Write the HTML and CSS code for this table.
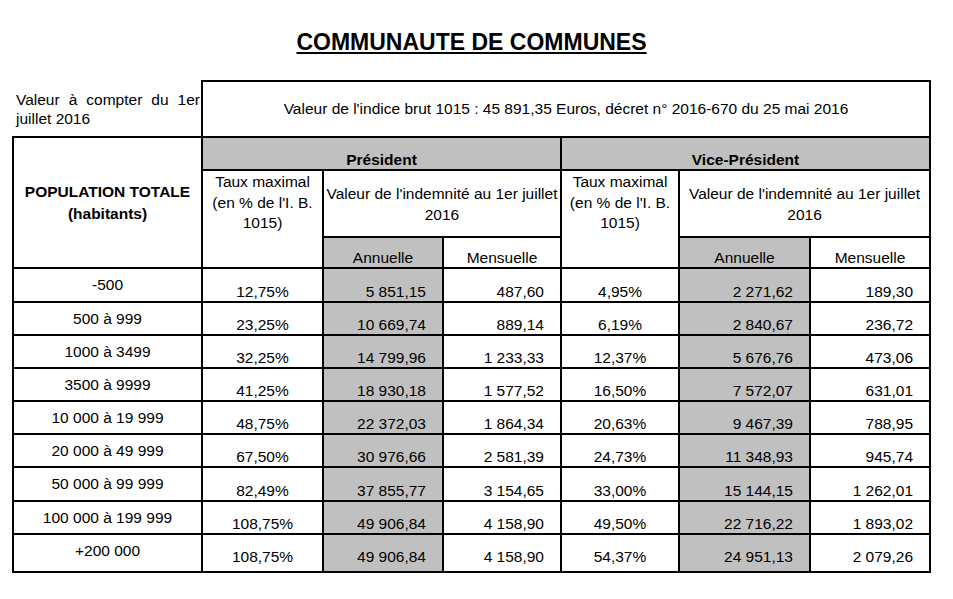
FILE: index.html
```html
<!DOCTYPE html>
<html lang="fr">
<head>
<meta charset="utf-8">
<title>Communauté de communes</title>
<link rel="stylesheet" href="styles.css">
</head>
<body>
<div class="page">
  <h1 class="title">COMMUNAUTE DE COMMUNES</h1>
  <table class="grid">
    <colgroup>
      <col class="c-pop">
      <col class="c-taux">
      <col class="c-ann">
      <col class="c-men">
      <col class="c-taux2">
      <col class="c-ann2">
      <col class="c-men2">
    </colgroup>
    <tbody>
      <tr class="h-top">
        <td class="corner">Valeur à compter du 1er juillet 2016</td>
        <td class="indice" colspan="6">Valeur de l'indice brut 1015 : 45 891,35 Euros, décret n° 2016-670 du 25 mai 2016</td>
      </tr>
      <tr class="h-role">
        <th class="pop-head" rowspan="3">POPULATION TOTALE<br>(habitants)</th>
        <th class="role gray" colspan="3">Président</th>
        <th class="role gray" colspan="3">Vice-Président</th>
      </tr>
      <tr class="h-sub">
        <td class="taux-head" rowspan="2">Taux maximal<br>(en % de l'I. B.<br>1015)</td>
        <td class="val-head" colspan="2">Valeur de l'indemnité au 1er juillet<br>2016</td>
        <td class="taux-head" rowspan="2">Taux maximal<br>(en % de l'I. B.<br>1015)</td>
        <td class="val-head" colspan="2">Valeur de l'indemnité au 1er juillet<br>2016</td>
      </tr>
      <tr class="h-per">
        <td class="per gray">Annuelle</td>
        <td class="per">Mensuelle</td>
        <td class="per gray">Annuelle</td>
        <td class="per">Mensuelle</td>
      </tr>
      <tr class="row r34">
        <td class="pop">-500</td><td class="pct">12,75%</td><td class="amt gray">5 851,15</td><td class="amt">487,60</td><td class="pct">4,95%</td><td class="amt gray">2 271,62</td><td class="amt">189,30</td>
      </tr>
      <tr class="row">
        <td class="pop">500 à 999</td><td class="pct">23,25%</td><td class="amt gray">10 669,74</td><td class="amt">889,14</td><td class="pct">6,19%</td><td class="amt gray">2 840,67</td><td class="amt">236,72</td>
      </tr>
      <tr class="row">
        <td class="pop">1000 à 3499</td><td class="pct">32,25%</td><td class="amt gray">14 799,96</td><td class="amt">1 233,33</td><td class="pct">12,37%</td><td class="amt gray">5 676,76</td><td class="amt">473,06</td>
      </tr>
      <tr class="row">
        <td class="pop">3500 à 9999</td><td class="pct">41,25%</td><td class="amt gray">18 930,18</td><td class="amt">1 577,52</td><td class="pct">16,50%</td><td class="amt gray">7 572,07</td><td class="amt">631,01</td>
      </tr>
      <tr class="row">
        <td class="pop">10 000 à 19 999</td><td class="pct">48,75%</td><td class="amt gray">22 372,03</td><td class="amt">1 864,34</td><td class="pct">20,63%</td><td class="amt gray">9 467,39</td><td class="amt">788,95</td>
      </tr>
      <tr class="row">
        <td class="pop">20 000 à 49 999</td><td class="pct">67,50%</td><td class="amt gray">30 976,66</td><td class="amt">2 581,39</td><td class="pct">24,73%</td><td class="amt gray">11 348,93</td><td class="amt">945,74</td>
      </tr>
      <tr class="row r34">
        <td class="pop">50 000 à 99 999</td><td class="pct">82,49%</td><td class="amt gray">37 855,77</td><td class="amt">3 154,65</td><td class="pct">33,00%</td><td class="amt gray">15 144,15</td><td class="amt">1 262,01</td>
      </tr>
      <tr class="row">
        <td class="pop">100 000 à 199 999</td><td class="pct">108,75%</td><td class="amt gray">49 906,84</td><td class="amt">4 158,90</td><td class="pct">49,50%</td><td class="amt gray">22 716,22</td><td class="amt">1 893,02</td>
      </tr>
      <tr class="row last">
        <td class="pop">+200 000</td><td class="pct">108,75%</td><td class="amt gray">49 906,84</td><td class="amt">4 158,90</td><td class="pct">54,37%</td><td class="amt gray">24 951,13</td><td class="amt">2 079,26</td>
      </tr>
    </tbody>
  </table>
</div>
</body>
</html>
```

FILE: styles.css
```css
html, body {
  margin: 0;
  padding: 0;
  background: #ffffff;
}

body {
  font-family: "Liberation Sans", Arial, Helvetica, sans-serif;
  color: #000000;
  font-size: 15.5px;
}

.page {
  width: 919px;
  margin-left: 12px;
  padding-top: 29px;
}

.title {
  margin: 0 0 24px 0;
  font-size: 23px;
  line-height: 27px;
  font-weight: bold;
  text-align: center;
  text-decoration: underline;
  text-decoration-thickness: 2px;
  text-underline-offset: 2px;
}

.grid {
  width: 919px;
  table-layout: fixed;
  border-collapse: collapse;
  border-spacing: 0;
}

.c-pop { width: 189px; }
.c-taux { width: 121px; }
.c-ann { width: 120px; }
.c-men { width: 118px; }
.c-taux2 { width: 118px; }
.c-ann2 { width: 131px; }
.c-men2 { width: 120px; }

.grid td,
.grid th {
  border: 2px solid #000000;
  padding: 0 2px;
  font-size: 15.5px;
  line-height: 18px;
  font-weight: normal;
  text-align: center;
  vertical-align: bottom;
}

.grid .gray {
  background: #c0c0c0;
}

.h-top { height: 56px; }
.h-role { height: 33px; }
.h-sub { height: 67px; }
.h-per { height: 31px; }

.grid .corner {
  border-top: none;
  border-left: none;
  text-align: justify;
  vertical-align: middle;
  line-height: 19px;
  padding: 0 1px 0 3px;
}

.grid .indice {
  vertical-align: middle;
}

.grid .pop-head {
  font-weight: bold;
  line-height: 22px;
  vertical-align: middle;
}

.grid .role {
  font-weight: bold;
}

.grid .taux-head {
  vertical-align: top;
  line-height: 20.5px;
  padding-top: 1px;
}

.grid .val-head {
  vertical-align: middle;
  line-height: 21px;
  padding: 0 1px;
  white-space: nowrap;
}

.row { height: 33px; }
.row.r34 { height: 34px; }
.row.last { height: 38px; }

.grid .pop {
  vertical-align: middle;
}

.grid .amt {
  text-align: right;
  padding-right: 16px;
}

.row.last td {
  padding-bottom: 5px;
}
```
